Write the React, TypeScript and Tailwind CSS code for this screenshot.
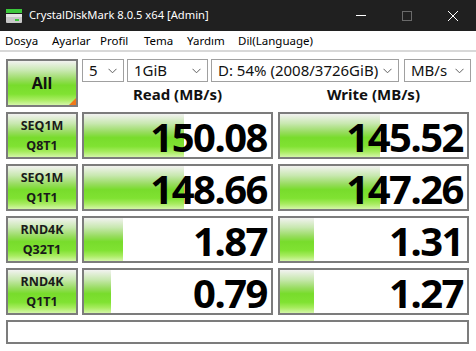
import React from 'react';

const font = { fontFamily: '"Noto Sans", "Open Sans", sans-serif' };

const rows = [
  { l1: 'SEQ1M', l2: 'Q8T1', read: '150.08', write: '145.52', rw: 100, ww: 100 },
  { l1: 'SEQ1M', l2: 'Q1T1', read: '148.66', write: '147.26', rw: 100, ww: 100 },
  { l1: 'RND4K', l2: 'Q32T1', read: '1.87', write: '1.31', rw: 39, ww: 34 },
  { l1: 'RND4K', l2: 'Q1T1', read: '0.79', write: '1.27', rw: 27, ww: 34 },
];

const greenBg =
  'bg-[linear-gradient(to_bottom,#f2f2f0_0%,#c8e8b0_22%,#98dc60_42%,#78dc2c_55%,#80e232_75%,#a8ec60_88%,#d4f6a8_100%)]';

const Chevron = () => (
  <svg width="9" height="6" viewBox="0 0 9 6" className="shrink-0">
    <path d="M0.5 0.8 L4.5 4.8 L8.5 0.8" fill="none" stroke="#606060" strokeWidth="1" />
  </svg>
);

const Select = ({ w, text }: { w: string; text: string }) => (
  <div className={`${w} h-[23px] border border-[#a0a0a0] bg-white flex items-center pl-[6px] pr-[6px] gap-1`}>
    <span className="flex-1 overflow-hidden whitespace-nowrap text-[15px] leading-[21px] text-[#111]">{text}</span>
    <Chevron />
  </div>
);

// result cell: green bar drawn behind the right-aligned value
const Cell = ({ value, fill }: { value: string; fill: number }) => (
  <div className="relative w-[191px] h-full border-2 border-[#7c7c7c] bg-white">
    <div className={`absolute left-0 top-0 bottom-0 ${greenBg}`} style={{ width: fill }} />
    <div className="relative h-full flex items-center justify-end pr-[4px] pt-[3px] text-[40px] font-bold leading-[40px] text-black tracking-[-1.5px]">
      {value}
    </div>
  </div>
);

export default function App() {
  return (
    <div className="w-[476px] h-[351px] bg-white overflow-hidden flex flex-col" style={font}>
      {/* title bar */}
      <div className="h-[31px] bg-[#202020] flex items-center shrink-0">
        <svg width="16" height="14" viewBox="0 0 16 14" className="ml-[6px]">
          <rect x="0" y="0" width="16" height="4" fill="#3cc83c" />
          <rect x="0" y="5" width="16" height="9" rx="1" fill="#c8c8c8" />
          <rect x="0" y="5" width="16" height="3" fill="#e4e4e4" />
          <rect x="9" y="10" width="4" height="2" fill="#3cc83c" />
        </svg>
        <span className="ml-[7px] text-[11.2px] text-white">CrystalDiskMark 8.0.5 x64 [Admin]</span>
        <div className="ml-auto flex items-center h-full">
          <div className="w-[46px] flex justify-center">
            <div className="w-[10px] h-px bg-white" />
          </div>
          <div className="w-[46px] flex justify-center">
            <div className="w-[10px] h-[10px] border border-[#6a6a6a]" />
          </div>
          <div className="w-[46px] flex justify-center">
            <svg width="10" height="10" viewBox="0 0 10 10">
              <path d="M0 0 L10 10 M10 0 L0 10" stroke="#fff" strokeWidth="1" />
            </svg>
          </div>
        </div>
      </div>
      {/* menu */}
      <div className="h-[21px] flex items-center pl-[5px] text-[11.5px] text-black border-b-2 border-[#d8d8d8] shrink-0">
        <span className="w-[47px]">Dosya</span>
        <span className="w-[48px]">Ayarlar</span>
        <span className="w-[44px]">Profil</span>
        <span className="w-[43px]">Tema</span>
        <span className="w-[51px]">Yardım</span>
        <span>Dil(Language)</span>
      </div>
      {/* body */}
      <div className="pl-[6px] pt-[7px] flex flex-col gap-[5px]">
        <div className="flex h-[48px]">
          <div className={`relative w-[72px] h-full border-2 border-[#7c7c7c] ${greenBg} flex items-center justify-center text-[16px] font-bold text-[#111]`}>
            All
            <div className="absolute right-0 bottom-0 w-0 h-0 border-l-[7px] border-l-transparent border-b-[7px] border-b-[#f07818]" />
          </div>
          <div className="ml-[4px] flex flex-col">
            <div className="flex">
              <Select w="w-[42px]" text="5" />
              <div className="ml-[3px]"><Select w="w-[81px]" text="1GiB" /></div>
              <div className="ml-[3px]"><Select w="w-[188px]" text="D: 54% (2008/3726GiB)" /></div>
              <div className="ml-[5px]"><Select w="w-[67px]" text="MB/s" /></div>
            </div>
            <div className="flex flex-1 items-center text-[15px] font-bold text-[#111]">
              <div className="w-[191px] text-center">Read (MB/s)</div>
              <div className="w-[191px] ml-[5px] text-center">Write (MB/s)</div>
            </div>
          </div>
        </div>
        {rows.map((r, i) => (
          <div key={i} className="flex h-[47px]">
            <div className={`w-[72px] h-full border-2 border-[#7c7c7c] ${greenBg} flex flex-col items-center justify-center text-[12.5px] font-bold leading-[20px] text-[#1a1a1a]`}>
              <span>{r.l1}</span>
              <span>{r.l2}</span>
            </div>
            <div className="ml-[4px] h-full"><Cell value={r.read} fill={r.rw} /></div>
            <div className="ml-[5px] h-full"><Cell value={r.write} fill={r.ww} /></div>
          </div>
        ))}
        <div className="w-[463px] h-[24px] border-2 border-[#7c7c7c] bg-white" />
      </div>
    </div>
  );
}
